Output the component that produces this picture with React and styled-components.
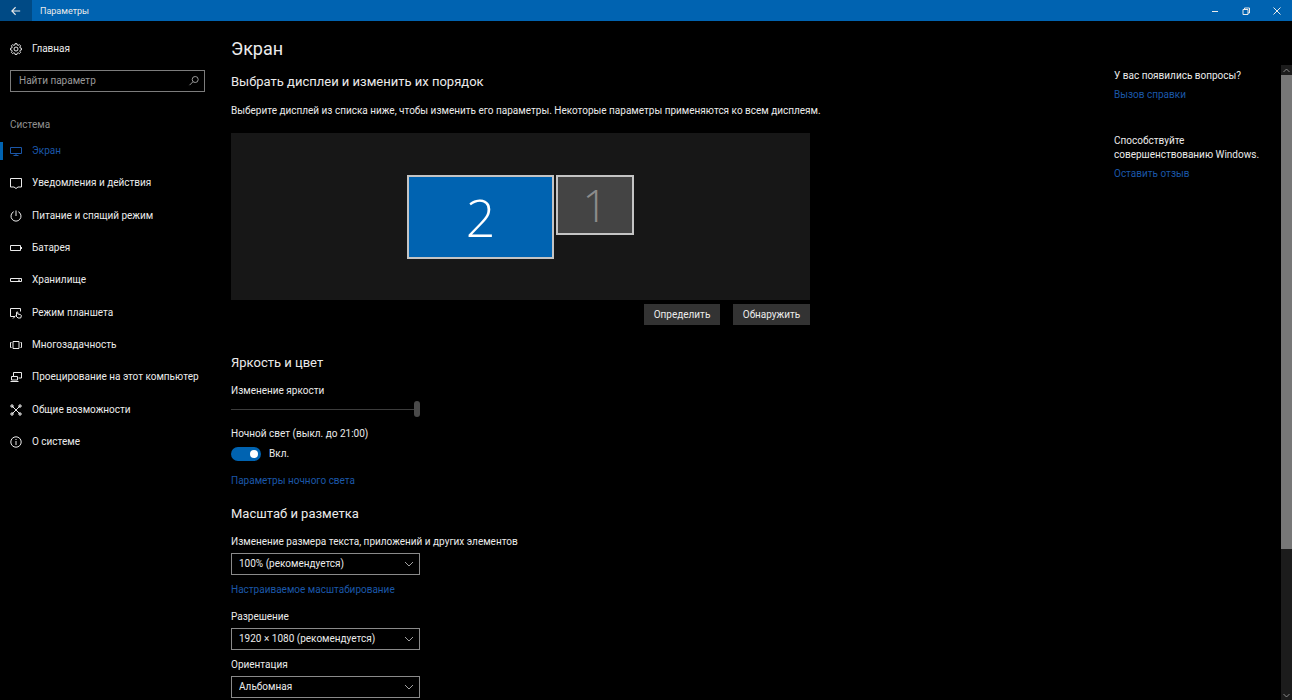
import { useState } from 'react'
import styled, { createGlobalStyle } from 'styled-components'

const GlobalStyle = createGlobalStyle`
  * {
    box-sizing: border-box;
  }
  body {
    margin: 0;
    background: #000;
    color: #ebebeb;
    font: 10px/14px Roboto, 'Open Sans', sans-serif;
  }
  button,
  input,
  select {
    font: inherit;
    color: inherit;
  }
`

const Window = styled.div`
  display: flex;
  flex-direction: column;
  height: 100vh;
  overflow: hidden;
`

const TitleBar = styled.header`
  display: flex;
  align-items: stretch;
  flex: none;
  height: 21px;
  background: #0063b1;
`

const BackButton = styled.button`
  display: grid;
  place-items: center;
  width: 32px;
  padding: 0;
  border: 0;
  background: #004a85;
`

const AppName = styled.span`
  flex: 1;
  padding: 1px 0 0 8px;
  font-size: 9px;
  line-height: 20px;
`

const CaptionButton = styled.button`
  display: grid;
  place-items: center;
  width: 31px;
  padding: 0;
  border: 0;
  background: transparent;
`

const Body = styled.div`
  display: flex;
  flex: 1;
  min-height: 0;
`

const Sidebar = styled.aside`
  flex: none;
  width: 220px;
  padding-top: 16px;
`

const NavLink = styled.a`
  display: flex;
  align-items: center;
  gap: 10px;
  height: 24px;
  padding-left: 10px;
  color: ${(props) => (props.$active ? '#1b57a8' : 'inherit')};
  text-decoration: none;
  white-space: nowrap;
`

const SearchBox = styled.label`
  display: flex;
  align-items: center;
  height: 22px;
  margin: 9px 15px 0 10px;
  padding: 0 4px 0 8px;
  border: 1px solid #7c7c7c;
`

const SearchInput = styled.input`
  flex: 1;
  min-width: 0;
  padding: 0;
  border: 0;
  outline: 0;
  background: transparent;

  &::placeholder {
    color: #9a9a9a;
    opacity: 1;
  }
`

const GroupTitle = styled.div`
  margin: 26px 0 3px 10px;
  color: #8f8f8f;
`

const NavList = styled.ul`
  display: grid;
  grid-auto-rows: 1fr;
  height: 323px;
  margin: 0;
  padding: 0;
  list-style: none;
`

const NavItem = styled.li`
  display: grid;
  align-items: center;

  ${NavLink} {
    height: 18px;
    padding-left: 7px;
    border-left: 3px solid ${(props) => (props.$active ? '#0063b1' : 'transparent')};
  }
`

const Page = styled.main`
  display: flex;
  flex-direction: column;
  flex: 1;
  min-width: 0;
`

const PageTitle = styled.h1`
  flex: none;
  height: 44px;
  margin: 0;
  padding: 16px 0 0 11px;
  font-size: 18px;
  font-weight: 400;
  line-height: 24px;
`

const Scroller = styled.div`
  display: flex;
  flex: 1;
  min-height: 0;
`

const Content = styled.div`
  flex: 0 1 590px;
  min-width: 0;
  padding: 7px 0 0 11px;
`

const Section = styled.section`
  display: flex;
  flex-direction: column;
  align-items: flex-start;
  margin-bottom: ${(props) => props.$gap}px;
`

const SectionTitle = styled.h2`
  margin: 0 0 11px;
  font-size: 13px;
  font-weight: 400;
  line-height: 20px;
`

const Paragraph = styled.p`
  margin: 1px 0 15px;
  white-space: nowrap;
`

const Arena = styled.div`
  display: flex;
  justify-content: center;
  align-items: flex-start;
  gap: 2px;
  width: 100%;
  height: 167px;
  padding-top: 42px;
  background: #171717;
`

const Monitor = styled.button`
  width: ${(props) => (props.$selected ? 147 : 78)}px;
  height: ${(props) => (props.$selected ? 84 : 60)}px;
  padding: 0;
  border: 2px solid #c4c4c4;
  background: ${(props) => (props.$selected ? '#0063b1' : '#444')};
  color: ${(props) => (props.$selected ? '#fff' : '#8c8c8c')};
  font-family: 'Open Sans', sans-serif;
  font-size: ${(props) => (props.$selected ? 52 : 44)}px;
  font-weight: 300;
  line-height: 1;
`

const ButtonRow = styled.div`
  display: flex;
  align-self: flex-end;
  gap: 13px;
  margin-top: 4px;
`

const PushButton = styled.button`
  width: ${(props) => props.$width}px;
  height: 21px;
  padding: 0;
  border: 0;
  background: #333;
`

const Label = styled.label`
  margin-bottom: 3px;
`

const Slider = styled.input`
  appearance: none;
  width: 189px;
  height: 16px;
  margin: 0 0 10px;
  background: linear-gradient(#3c3c3c, #3c3c3c) center / 100% 1px no-repeat;

  &::-webkit-slider-thumb {
    appearance: none;
    width: 6px;
    height: 16px;
    border-radius: 3px;
    background: #4a4a4a;
  }
`

const ToggleRow = styled.label`
  display: flex;
  align-items: center;
  gap: 8px;
  height: 14px;
  margin: 3px 0 13px;
`

const Toggle = styled.input`
  appearance: none;
  display: flex;
  align-items: center;
  justify-content: ${(props) => (props.checked ? 'flex-end' : 'flex-start')};
  width: 30px;
  height: 14px;
  margin: 0;
  padding: 0 3px;
  border-radius: 7px;
  background: ${(props) => (props.checked ? '#0063b1' : '#555')};

  &::before {
    content: '';
    width: 8px;
    height: 8px;
    border-radius: 50%;
    background: #fff;
  }
`

const Link = styled.a`
  color: #1b57a8;
  text-decoration: none;
`

const SelectBox = styled.div`
  display: grid;
  align-items: center;
  width: 189px;
  margin: 1px 0 8px;

  > * {
    grid-area: 1 / 1;
  }

  > svg {
    justify-self: end;
    margin-right: 5px;
    pointer-events: none;
  }
`

const Select = styled.select`
  appearance: none;
  width: 100%;
  height: 22px;
  padding: 0 20px 0 7px;
  border: 1px solid #8a8a8a;
  border-radius: 0;
  background: #000;
`

const ScalingLink = styled(Link)`
  margin-bottom: 13px;
`

const Help = styled.aside`
  flex: none;
  width: 167px;
  margin-left: auto;
  padding-top: 4px;
`

const HelpBlock = styled.div`
  margin-bottom: 32px;
`

const HelpText = styled.p`
  margin: 0 0 5px;
`

const ScrollBar = styled.div`
  display: flex;
  flex-direction: column;
  flex: none;
  width: 11px;
  background: #1c1c1c;
`

const ScrollButton = styled.button`
  display: grid;
  place-items: center;
  height: 10px;
  padding: 0;
  border: 0;
  background: transparent;
`

const ScrollTrack = styled.div`
  flex: 1;
`

const ScrollThumb = styled.div`
  height: 77%;
  background: #777;
`

const icons = {
  home: (
    <>
      <path d="M5.1.6h1.8l.3 1.4 1 .4 1.2-.8 1.2 1.2-.8 1.2.4 1 1.3.3v1.6l-1.3.3-.4 1 .8 1.2-1.2 1.2-1.2-.8-1 .4-.3 1.3H5.1l-.3-1.3-1-.4-1.2.8-1.2-1.2.8-1.2-.4-1L.5 6.900V5.300L1.800 5l.4-1-.8-1.200 1.200-1.200 1.200.8 1-.4z" />
      <circle cx="6" cy="6" r="2" />
    </>
  ),
  display: <path d="M.5 2.500h11v6H.5zM6 8.500v2M3.500 10.500h5" />,
  message: <path d="M.5 1.500h11v8.500H8L6 11.500 4 10H.5z" />,
  power: <path d="M6 .5v5.500M3.700 1.700a5 5 0 1 0 4.600 0" />,
  battery: <path d="M.5 3.500h10v5H.5zM11.500 5v2" />,
  storage: <path d="M.5 4.500h11v3H.5zM8 6.200h2" />,
  tablet: (
    <path d="M5 9.500H.5v-8h10v3M3 11.500l2-2M6.500 9V5.200q.7-.8 1.300 0V7l2.700.6q1 .4.8 1.400L10.700 11H8L5.500 8.500" />
  ),
  tasks: <path d="M3 2.500h6v7H3zM1.500 3.500h-1v5h1M10.500 3.500h1v5h-1" />,
  project: <path d="M3.500 5V1.500h8v5.500H8.500M1.500 5.500h6V9h-6zM.5 10.500h8" />,
  shared: (
    <>
      <path d="M2 2l8 8M10 2l-8 8" />
      <path d="M1 1h2v2H1zM9 1h2v2H9zM1 9h2v2H1zM9 9h2v2H9z" />
    </>
  ),
  about: (
    <>
      <circle cx="6" cy="6" r="5.200" />
      <path d="M6 5v4M6 3v1" />
    </>
  ),
  search: (
    <>
      <circle cx="7.200" cy="4.500" r="3" />
      <path d="M5 6.700L1.500 10.200" />
    </>
  ),
  back: <path d="M11 6H1M5.500 1.500L1 6l4.500 4.500" strokeWidth="1.300" />,
  minimize: <path d="M3 6.500h6" />,
  restore: <path d="M3 4.500h5v5H3zM4.500 4.500V3h5v5H8" />,
  close: <path d="M2.500 2.500l7 7M9.500 2.500l-7 7" />,
  down: <path d="M2 4l4 4 4-4" />,
  up: <path d="M2 8l4-4 4 4" />,
}

const Icon = ({ name, size = 12, color = 'currentColor' }) => (
  <svg
    width={size}
    height={size}
    viewBox="0 0 12 12"
    fill="none"
    stroke={color}
    strokeWidth="1"
    aria-hidden="true"
  >
    {icons[name]}
  </svg>
)

const navItems = [
  { icon: 'display', text: 'Экран', active: true },
  { icon: 'message', text: 'Уведомления и действия' },
  { icon: 'power', text: 'Питание и спящий режим' },
  { icon: 'battery', text: 'Батарея' },
  { icon: 'storage', text: 'Хранилище' },
  { icon: 'tablet', text: 'Режим планшета' },
  { icon: 'tasks', text: 'Многозадачность' },
  { icon: 'project', text: 'Проецирование на этот компьютер' },
  { icon: 'shared', text: 'Общие возможности' },
  { icon: 'about', text: 'О системе' },
]

const Dropdown = ({ id, label, options }) => (
  <>
    <Label htmlFor={id}>{label}</Label>
    <SelectBox>
      <Select id={id}>
        {options.map((option) => (
          <option key={option}>{option}</option>
        ))}
      </Select>
      <Icon name="down" color="#a0a0a0" />
    </SelectBox>
  </>
)

const SideNav = () => (
  <Sidebar>
    <NavLink href="#home">
      <Icon name="home" />
      Главная
    </NavLink>
    <SearchBox>
      <SearchInput type="text" placeholder="Найти параметр" aria-label="Найти параметр" />
      <Icon name="search" color="#9a9a9a" />
    </SearchBox>
    <GroupTitle>Система</GroupTitle>
    <NavList>
      {navItems.map(({ icon, text, active }) => (
        <NavItem key={icon} $active={active}>
          <NavLink href={`#${icon}`} $active={active}>
            <Icon name={icon} />
            {text}
          </NavLink>
        </NavItem>
      ))}
    </NavList>
  </Sidebar>
)

const App = () => {
  const [selected, setSelected] = useState(2)
  const [brightness, setBrightness] = useState(100)
  const [nightLight, setNightLight] = useState(true)

  return (
    <Window>
      <GlobalStyle />
      <TitleBar>
        <BackButton aria-label="Назад">
          <Icon name="back" size={10} />
        </BackButton>
        <AppName>Параметры</AppName>
        <CaptionButton aria-label="Свернуть">
          <Icon name="minimize" />
        </CaptionButton>
        <CaptionButton aria-label="Восстановить">
          <Icon name="restore" />
        </CaptionButton>
        <CaptionButton aria-label="Закрыть">
          <Icon name="close" />
        </CaptionButton>
      </TitleBar>
      <Body>
        <SideNav />
        <Page>
          <PageTitle>Экран</PageTitle>
          <Scroller>
            <Content>
              <Section $gap={28}>
                <SectionTitle>Выбрать дисплеи и изменить их порядок</SectionTitle>
                <Paragraph>
                  Выберите дисплей из списка ниже, чтобы изменить его параметры. Некоторые параметры
                  применяются ко всем дисплеям.
                </Paragraph>
                <Arena>
                  {[2, 1].map((n) => (
                    <Monitor key={n} $selected={selected === n} onClick={() => setSelected(n)}>
                      {n}
                    </Monitor>
                  ))}
                </Arena>
                <ButtonRow>
                  <PushButton $width={76}>Определить</PushButton>
                  <PushButton $width={77}>Обнаружить</PushButton>
                </ButtonRow>
              </Section>
              <Section $gap={16}>
                <SectionTitle>Яркость и цвет</SectionTitle>
                <Label htmlFor="brightness">Изменение яркости</Label>
                <Slider
                  id="brightness"
                  type="range"
                  value={brightness}
                  onChange={(e) => setBrightness(Number(e.target.value))}
                />
                <Label htmlFor="night-light">Ночной свет (выкл. до 21:00)</Label>
                <ToggleRow>
                  <Toggle
                    id="night-light"
                    type="checkbox"
                    checked={nightLight}
                    onChange={(e) => setNightLight(e.target.checked)}
                  />
                  {nightLight ? 'Вкл.' : 'Откл.'}
                </ToggleRow>
                <Link href="#night-light-settings">Параметры ночного света</Link>
              </Section>
              <Section $gap={0}>
                <SectionTitle>Масштаб и разметка</SectionTitle>
                <Dropdown
                  id="scale"
                  label="Изменение размера текста, приложений и других элементов"
                  options={['100% (рекомендуется)', '125%', '150%', '175%']}
                />
                <ScalingLink href="#custom-scaling">Настраиваемое масштабирование</ScalingLink>
                <Dropdown
                  id="resolution"
                  label="Разрешение"
                  options={['1920 × 1080 (рекомендуется)', '1600 × 900', '1280 × 720']}
                />
                <Dropdown
                  id="orientation"
                  label="Ориентация"
                  options={['Альбомная', 'Книжная']}
                />
              </Section>
            </Content>
            <Help>
              <HelpBlock>
                <HelpText>У вас появились вопросы?</HelpText>
                <Link href="#help">Вызов справки</Link>
              </HelpBlock>
              <HelpBlock>
                <HelpText>Способствуйте совершенствованию Windows.</HelpText>
                <Link href="#feedback">Оставить отзыв</Link>
              </HelpBlock>
            </Help>
            <ScrollBar>
              <ScrollButton aria-label="Прокрутить вверх">
                <Icon name="up" size={9} color="#aaa" />
              </ScrollButton>
              <ScrollTrack>
                <ScrollThumb />
              </ScrollTrack>
              <ScrollButton aria-label="Прокрутить вниз">
                <Icon name="down" size={9} color="#aaa" />
              </ScrollButton>
            </ScrollBar>
          </Scroller>
        </Page>
      </Body>
    </Window>
  )
}

export default App
